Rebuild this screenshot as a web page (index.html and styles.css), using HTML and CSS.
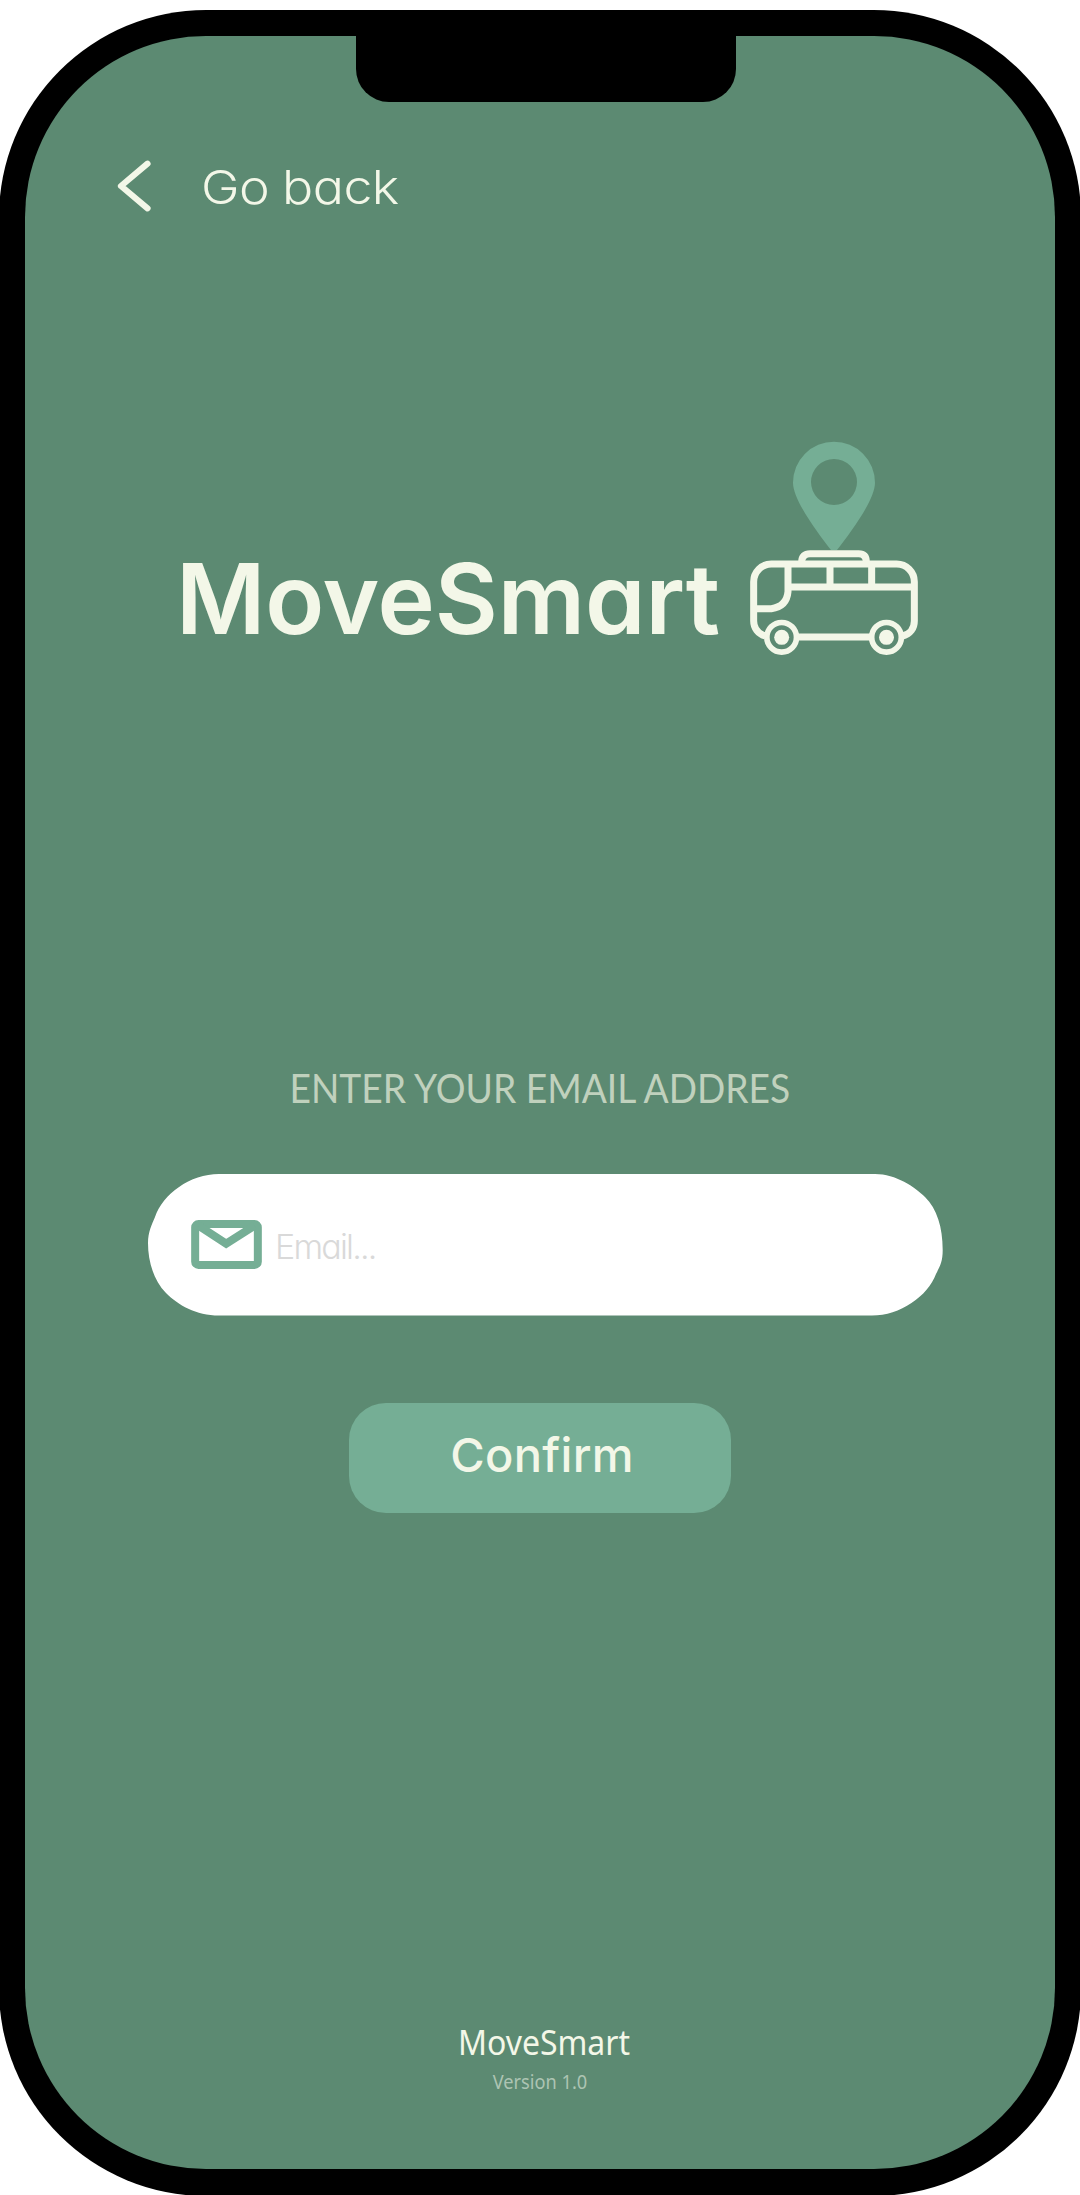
FILE: index.html
```html
<!DOCTYPE html>
<html lang="en">
<head>
<meta charset="utf-8">
<title>MoveSmart</title>
<link rel="stylesheet" href="styles.css">
</head>
<body>
<div class="phone">
  <div class="notch"></div>
  <main class="screen">
    <header class="header">
      <svg class="back-icon" viewBox="0 0 40 60"><path d="M33.5 7.700 7 30 33.5 52.300"/></svg>
      <span class="back-text">Go back</span>
    </header>

    <section class="brand">
      <h1 class="brand-name">MoveSmart</h1>
      <svg class="brand-logo" viewBox="54 60 516 654">
        <path class="pin" fill-rule="evenodd" d="M303 390C262 337 189 240 189 188A123 123 0 0 1 435 188C435 240 362 337 321 390ZM381 186A69 69 0 1 0 243 186A69 69 0 1 0 381 186Z"/>
        <g class="bus">
          <path d="M106 648C84 641 71 624 71 603V485A53 53 0 0 1 124 432H500A53 53 0 0 1 553 485V603C553 625 541 642 518 648"/>
          <path d="M205 651H420"/>
          <path d="M215 426C215 410 224 401 240 401H386C402 401 409 410 409 426"/>
          <path d="M174 432V515Q170 560 124 566H75M174 501H553M300 432V501M425 432V501"/>
          <circle class="wheel" cx="155" cy="652" r="44.5"/>
          <circle class="wheel" cx="469.5" cy="652" r="44.5"/>
        </g>
        <circle class="hub" cx="155" cy="652" r="22.5"/>
        <circle class="hub" cx="469.5" cy="652" r="22.5"/>
      </svg>
    </section>

    <form class="form">
      <label class="label" for="email"><span class="label-text">ENTER YOUR EMAIL ADDRES</span></label>
      <div class="field" id="email">
        <svg class="mail-icon" viewBox="184 180 212 147">
          <rect x="196" y="192" width="188" height="123" rx="10"/>
          <path d="M206 197 289 251 374 197"/>
        </svg>
        <span class="placeholder">Email...</span>
      </div>
      <button class="confirm" type="button"><span class="confirm-text">Confirm</span></button>
    </form>

    <footer class="footer">
      <div class="footer-name">MoveSmart</div>
      <div class="footer-version">Version 1.0</div>
    </footer>
  </main>
</div>
</body>
</html>
```
FILE: styles.css
```css
* { box-sizing: border-box; }

html, body {
  margin: 0;
  width: 1080px;
  height: 2195px;
  overflow: hidden;
  background: #fff;
}

body {
  padding-top: 10px;
  font-family: Inter, "Liberation Sans", sans-serif;
  font-feature-settings: "cv11";
  color: #f3f7e8;
}

.phone {
  position: relative;
  width: 1082px;
  height: 2186px;
  margin-left: -1px;
  padding: 26px 26px 27px;
  background: #000;
  border-radius: 207px;
}

.notch {
  position: absolute;
  top: 20px;
  left: 357px;
  width: 380px;
  height: 72px;
  background: #000;
  border-radius: 0 0 33px 33px;
}

.screen {
  display: flex;
  flex-direction: column;
  width: 1030px;
  height: 2133px;
  padding-top: 120px;
  background: #5c8a72;
  border-radius: 181px;
}

.header {
  display: flex;
  align-items: center;
  height: 60px;
  padding-left: 89px;
}

.back-icon {
  width: 40px;
  height: 60px;
  fill: none;
  stroke: #f3f7e8;
  stroke-width: 6.2;
  stroke-linecap: round;
  stroke-linejoin: round;
}

.back-text {
  margin-left: 47px;
  padding-top: 1px;
  font-size: 46.5px;
  font-weight: 350;
  line-height: 60px;
  letter-spacing: -0.5px;
  word-spacing: -1px;
  transform: scaleX(1.115);
  transform-origin: left;
}

.brand {
  display: flex;
  align-items: flex-end;
  justify-content: space-between;
  height: 218px;
  margin-top: 224px;
  padding: 0 135px 0 151px;
}

.brand-name {
  margin: 0;
  font-size: 97px;
  font-weight: 600;
  line-height: 118px;
  letter-spacing: -0.1px;
  white-space: nowrap;
}

.brand-logo { flex: none; width: 172px; height: 218px; }
.pin { fill: #75ae95; }
.bus { fill: none; stroke: #f3f7e8; stroke-width: 21; }
.wheel { fill: #5c8a72; stroke-width: 17; }
.hub { fill: #f3f7e8; }

.form {
  display: flex;
  flex-direction: column;
  align-items: center;
  margin-top: 404px;
}

.label {
  font-family: Lato, sans-serif;
  font-size: 41.4px;
  font-weight: 400;
  line-height: 50px;
  color: #c0d1bd;
  white-space: nowrap;
  transform: scaleX(0.898);
}

.field {
  display: flex;
  align-items: center;
  width: 795px;
  height: 142px;
  margin-top: 62px;
  margin-left: 11px;
  padding-left: 43px;
  background: #fff;
  clip-path: path("M71 0H727C748 0 767 13 777 23C789 35 794.700 53 794.700 76C794.700 88 792 92 788 100C780 122 752 141.600 724 141.600H71C48 141.600 30 131 18 119C5 106 0 86 0 69C0 58 4 50 7 43C15 20 42 0 71 0Z");
}

.mail-icon { width: 71px; height: 49px; margin-bottom: 2px; fill: none; stroke: #75ae95; stroke-width: 24; }

.placeholder {
  margin-left: 13px;
  padding-top: 4px;
  font-size: 34px;
  font-weight: 300;
  line-height: 50px;
  letter-spacing: -1.8px;
  color: #d9d9d9;
}

.confirm {
  width: 382px;
  height: 110px;
  margin-top: 87px;
  padding: 0 0 6px 4px;
  border: 0;
  border-radius: 37px;
  background: #75ae95;
  font: 500 47px/104px Inter, sans-serif;
  font-feature-settings: "cv11";
  letter-spacing: 0.3px;
  color: #f3f7e8;
}

.footer {
  margin-top: 507px;
  margin-left: 8px;
  font-family: "Noto Sans", sans-serif;
  text-align: center;
}

.footer-name { font-size: 34px; line-height: 44px; transform: scaleX(0.94); }
.footer-version { margin-top: 3px; margin-right: 8px; font-size: 20px; line-height: 30px; color: #adc4b3; transform: scaleX(0.91); }
```
